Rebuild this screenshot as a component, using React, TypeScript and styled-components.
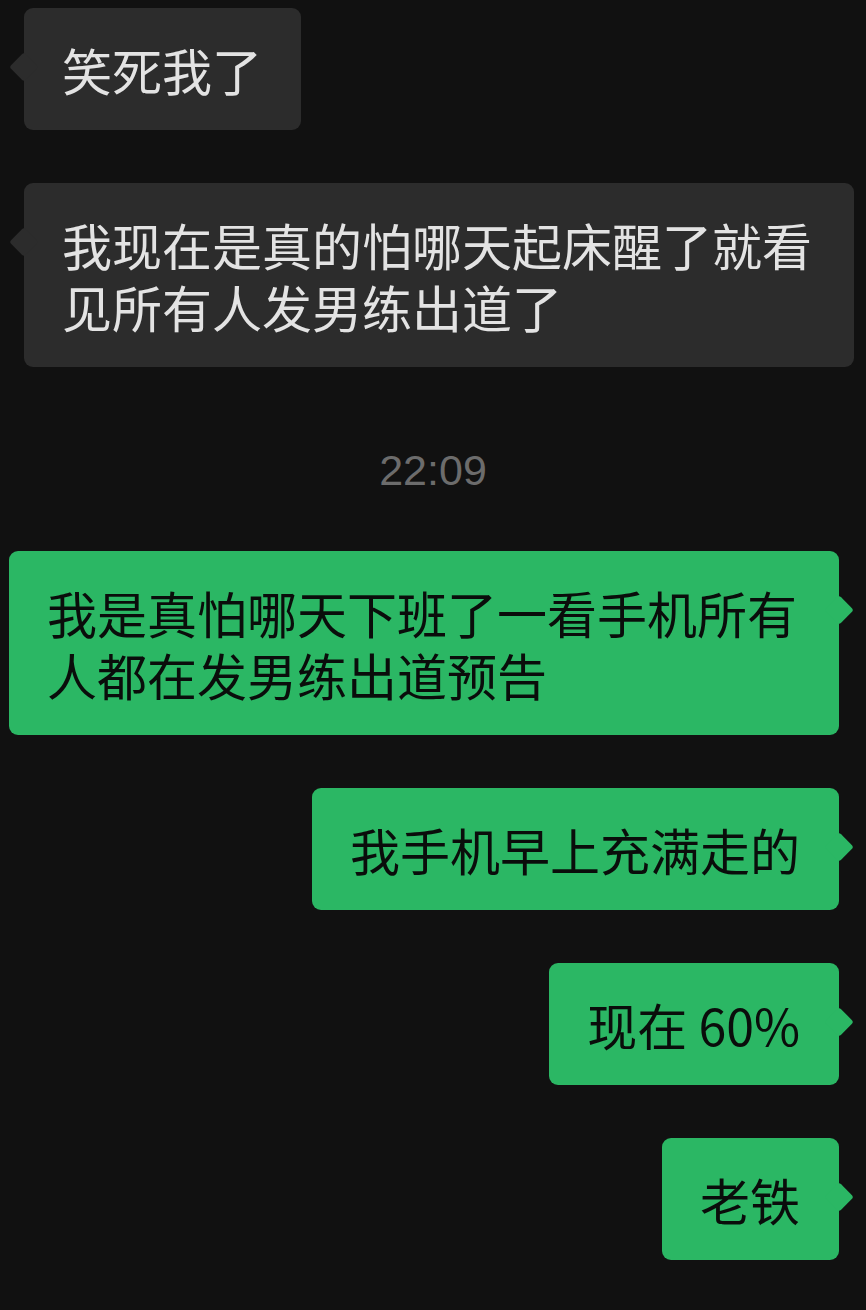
import React from "react";
import styled, { createGlobalStyle, css } from "styled-components";

const GlobalStyle = createGlobalStyle`
  html, body {
    margin: 0;
    padding: 0;
    background: #111111;
  }
  body {
    font-family: "Noto Sans CJK SC", "Noto Sans", sans-serif;
  }
`;

type Side = "left" | "right";

const Screen = styled.div`
  width: 866px;
  min-height: 1310px;
  background: #111111;
  padding-top: 8px;
  box-sizing: border-box;
  display: flex;
  flex-direction: column;
  gap: 53px;
`;

const Row = styled.div<{ $side: Side }>`
  display: flex;
  justify-content: ${p => (p.$side === "left" ? "flex-start" : "flex-end")};
  padding: ${p => (p.$side === "left" ? "0 12px 0 24px" : "0 27px 0 9px")};
`;

const Bubble = styled.div<{ $side: Side }>`
  position: relative;
  max-width: 830px;
  box-sizing: border-box;
  padding: 30px 39px 30px 38px;
  border-radius: 9px;
  font-size: 50px;
  line-height: 62px;
  word-break: break-all;
  ${p =>
    p.$side === "left"
      ? css`
          background: #2c2c2c;
          color: #e3e3e3;
        `
      : css`
          background: #2bb764;
          color: #0a0d0b;
        `}

  &::before {
    content: "";
    position: absolute;
    top: 59px;
    width: 21px;
    height: 21px;
    border-radius: 3px;
    background: inherit;
    transform: translate(-50%, -50%) rotate(45deg);
    ${p => (p.$side === "left" ? css`left: 0;` : css`left: 100%;`)}
  }
`;

const TimeRow = styled.div`
  display: flex;
  justify-content: center;
  padding: 26px 0 4px;
  font-family: "Liberation Sans", Arial, sans-serif;
  font-size: 43px;
  line-height: 48px;
  color: #6c6c6c;
`;

type Item =
  | { kind: "msg"; side: Side; text: string }
  | { kind: "time"; text: string };

const items: Item[] = [
  { kind: "msg", side: "left", text: "笑死我了" },
  { kind: "msg", side: "left", text: "我现在是真的怕哪天起床醒了就看见所有人发男练出道了" },
  { kind: "time", text: "22:09" },
  { kind: "msg", side: "right", text: "我是真怕哪天下班了一看手机所有人都在发男练出道预告" },
  { kind: "msg", side: "right", text: "我手机早上充满走的" },
  { kind: "msg", side: "right", text: "现在 60%" },
  { kind: "msg", side: "right", text: "老铁" },
];

export default function App() {
  return (
    <>
      <GlobalStyle />
      <Screen>
        {items.map((item, i) =>
          item.kind === "time" ? (
            <TimeRow key={i}>{item.text}</TimeRow>
          ) : (
            <Row key={i} $side={item.side}>
              <Bubble $side={item.side}>{item.text}</Bubble>
            </Row>
          )
        )}
      </Screen>
    </>
  );
}
